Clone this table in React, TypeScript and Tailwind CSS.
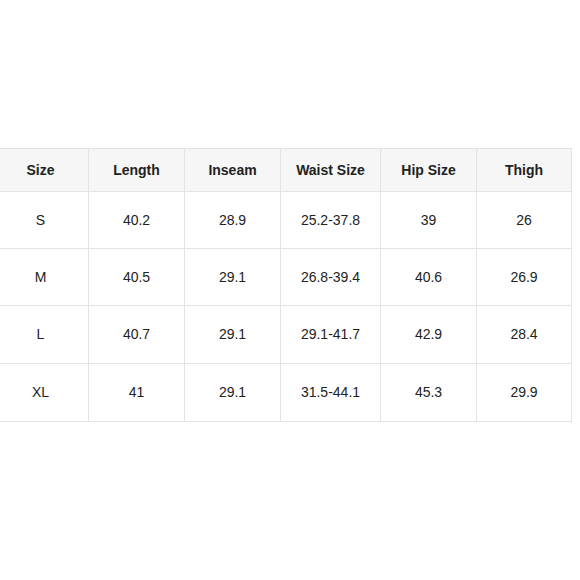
import React from "react";

const headers = ["Size", "Length", "Inseam", "Waist Size", "Hip Size", "Thigh"];
const rows = [
  ["S", "40.2", "28.9", "25.2-37.8", "39", "26"],
  ["M", "40.5", "29.1", "26.8-39.4", "40.6", "26.9"],
  ["L", "40.7", "29.1", "29.1-41.7", "42.9", "28.4"],
  ["XL", "41", "29.1", "31.5-44.1", "45.3", "29.9"],
];
const widths = ["w-[96px]", "w-[96px]", "w-[96px]", "w-[100px]", "w-[96px]", "w-[95px]"];
const rowH = ["h-[57px]", "h-[57px]", "h-[58px]", "h-[58px]"];

export default function App() {
  return (
    <div
      className="w-[580px] h-[580px] bg-white overflow-hidden pt-[148px]"
      style={{ fontFamily: '"Liberation Sans", Arial, sans-serif' }}
    >
      <table className="-ml-2 border-collapse table-fixed text-[14px] text-[#222]">
        <thead>
          <tr className="h-[43px] bg-[#f6f6f6]">
            {headers.map((h, i) => (
              <th key={h} className={`${widths[i]} border border-[#e3e3e3] font-bold text-center p-0`}>
                {h}
              </th>
            ))}
          </tr>
        </thead>
        <tbody>
          {rows.map((r, ri) => (
            <tr key={ri} className={rowH[ri]}>
              {r.map((c, i) => (
                <td key={i} className="border border-[#e3e3e3] text-center p-0">
                  {c}
                </td>
              ))}
            </tr>
          ))}
        </tbody>
      </table>
    </div>
  );
}
